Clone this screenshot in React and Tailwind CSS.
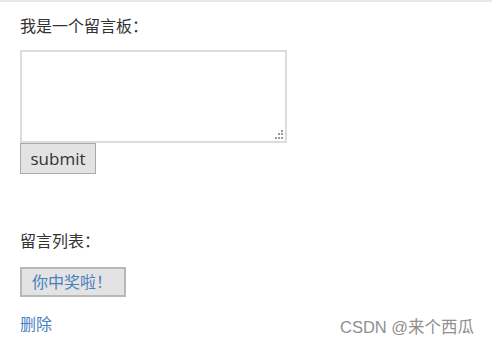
export default function App() {
  return (
    <div className="relative h-[343px] w-[492px] overflow-hidden border-t-2 border-[#e8e8e8] bg-white font-['Open_Sans','Noto_Sans_CJK_SC',sans-serif] text-[#333]">
      <div className="pl-5 pt-[12px]">
        <p className="text-[16px] leading-[24px]">我是一个留言板：</p>
        <div className="relative mt-[12px] w-[267px]">
          <textarea className="block h-[93px] w-[267px] resize-none border-2 border-[#dcdcdc] bg-white outline-none" />
          <svg className="absolute bottom-[4px] right-[4px]" width="9" height="9" viewBox="0 0 9 9" fill="#9a9a9a">
            <rect x="7" y="0" width="2" height="2" />
            <rect x="4" y="3" width="2" height="2" />
            <rect x="7" y="3" width="2" height="2" />
            <rect x="1" y="7" width="2" height="2" />
            <rect x="4" y="7" width="2" height="2" />
            <rect x="7" y="7" width="2" height="2" />
          </svg>
        </div>
        <button
          type="button"
          className="block h-[31px] w-[76px] border border-[#aaa] bg-[#e3e3e3] text-[17px] leading-none text-[#333]"
        >
          submit
        </button>
        <p className="mt-[55px] text-[16px] leading-[24px]">留言列表：</p>
        <button
          type="button"
          className="mt-[14px] block h-[30px] w-[106px] border-2 border-[#b8b8b8] bg-[#e3e3e3] pl-[10px] text-left text-[16px] leading-none text-[#4a7fbf]"
        >
          你中奖啦！
        </button>
        <a href="#" className="mt-[15px] block w-fit text-[16px] leading-[24px] text-[#4a7fbf]">
          删除
        </a>
      </div>
      <span className="absolute left-[340px] top-[313px] font-['Liberation_Sans','Noto_Sans_CJK_SC',sans-serif] text-[16.5px] text-[#8f8f8f]">
        CSDN @来个西瓜
      </span>
    </div>
  );
}
